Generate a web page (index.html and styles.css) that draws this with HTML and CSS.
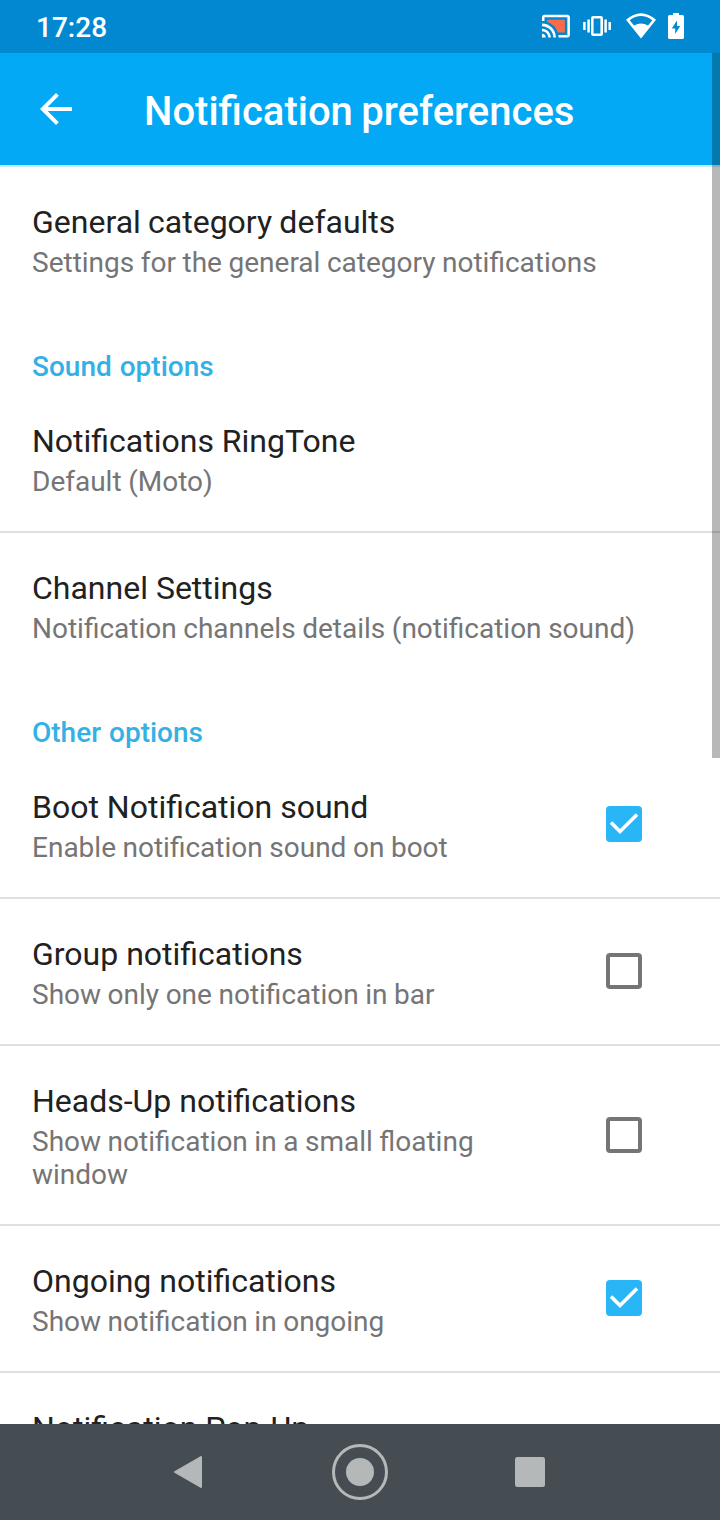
FILE: index.html
```html
<!DOCTYPE html>
<html lang="en">
<head>
<meta charset="utf-8">
<title>Notification preferences</title>
<link rel="stylesheet" href="styles.css">
</head>
<body>
<div class="screen">
  <header class="status">
    <span class="clock">17:28</span>
    <svg class="status-icons" width="150" height="32" viewBox="540 11 150 32">
      <g transform="translate(540.700 10.900) scale(1.270)">
        <path d="M5 7h14v10h-5.630A13 13 0 0 0 5 8.630z" fill="#fb6b48"/>
        <path d="M1 18v3h3c0-1.660-1.340-3-3-3zm0-4v2c2.760 0 5 2.240 5 5h2c0-3.870-3.130-7-7-7zm0-4v2c4.970 0 9 4.030 9 9h2c0-6.080-4.930-11-11-11zm20-7H3c-1.100 0-2 .9-2 2v3h2V5h18v14h-7v2h7c1.100 0 2-.9 2-2V5c0-1.100-.9-2-2-2z" fill="#fff"/>
      </g>
      <rect x="592.300" y="17.300" width="9.400" height="17.400" rx="1" fill="none" stroke="#fff" stroke-width="2.600"/>
      <path d="M584.400 22v8M588.600 19.500v13M605.600 19.500v13M609.700 22v8" stroke="#fff" stroke-width="2.500"/>
      <path fill-rule="evenodd" d="M626 19.800Q641 6.700 656 19.800L641 38.500zM629.700 20.200L634 25.600Q641 21.600 648 25.600L652.300 20.200Q641 11.800 629.700 20.200z" fill="#fff"/>
      <path d="M669.500 15h3.500v-2h6v2h3.500q1.500 0 1.500 1.500v21q0 1.500-1.500 1.500h-13q-1.500 0-1.500-1.500v-21q0-1.500 1.500-1.500z" fill="#fff"/>
      <path d="M677 20.500l-5.200 8h3.400v5.500l5-8H677z" fill="#0288d1"/>
    </svg>
  </header>
  <div class="appbar">
    <svg class="back" width="48" height="48" viewBox="0 0 24 24"><path d="M20 11H7.830l5.590-5.590L12 4l-8 8 8 8 1.410-1.410L7.830 13H20z" fill="#fff"/></svg>
    <h1 class="heading">Notification preferences</h1>
  </div>
  <main class="list">
    <section class="row"><div class="copy"><div class="title snug">General category defaults</div><div class="sub">Settings for the general category notifications</div></div></section>
    <h2 class="category">Sound options</h2>
    <section class="row"><div class="copy"><div class="title">Notifications RingTone</div><div class="sub">Default (Moto)</div></div></section>
    <section class="row ruled"><div class="copy"><div class="title">Channel Settings</div><div class="sub">Notification channels details (notification sound)</div></div></section>
    <h2 class="category">Other options</h2>
    <section class="row"><div class="copy"><div class="title">Boot Notification sound</div><div class="sub">Enable notification sound on boot</div></div><span class="box checked"><svg width="36" height="36" viewBox="0 0 36 36"><path d="M5 16.500l9 9L31 8.500" fill="none" stroke="#fff" stroke-width="3.600"/></svg></span></section>
    <section class="row ruled"><div class="copy"><div class="title">Group notifications</div><div class="sub">Show only one notification in bar</div></div><span class="box"></span></section>
    <section class="row ruled"><div class="copy"><div class="title">Heads-Up notifications</div><div class="sub">Show notification in a small floating<br>window</div></div><span class="box"></span></section>
    <section class="row ruled"><div class="copy"><div class="title">Ongoing notifications</div><div class="sub">Show notification in ongoing</div></div><span class="box checked"><svg width="36" height="36" viewBox="0 0 36 36"><path d="M5 16.500l9 9L31 8.500" fill="none" stroke="#fff" stroke-width="3.600"/></svg></span></section>
    <section class="row ruled"><div class="copy"><div class="title">Notification Pop-Up</div></div></section>
  </main>
  <nav class="nav">
    <svg width="720" height="96" viewBox="0 0 720 96"><path d="M175 48l26-15v30z" fill="#b4b8b9" stroke="#b4b8b9" stroke-width="2" stroke-linejoin="round"/><circle cx="360" cy="48" r="26.500" fill="none" stroke="#b4b8b9" stroke-width="3"/><circle cx="360" cy="48" r="14" fill="#b4b8b9"/><rect x="515" y="33" width="30" height="30" rx="2.500" fill="#b4b8b9"/></svg>
  </nav>
  <div class="scrollbar"></div>
</div>
</body>
</html>
```
FILE: styles.css
```css
body { margin: 0; font-family: Roboto, sans-serif; background: #fff; }
.screen { position: relative; width: 720px; height: 1520px; display: flex; flex-direction: column; overflow: hidden; }
.status { height: 53px; flex: none; background: #0288d1; display: flex; justify-content: space-between; box-sizing: border-box; padding: 11px 30px 0 36px; }
.clock { margin-top: 1px; color: #fff; font-size: 28px; line-height: 32px; font-weight: 500; }
.status-icons { display: block; }
.appbar { height: 112px; flex: none; background: #03a9f4; display: flex; align-items: center; }
.back { margin-left: 32px; }
.heading { margin: 5px 0 0 64px; color: #fff; font-size: 40px; line-height: 48px; font-weight: 500; word-spacing: -1.5px; white-space: nowrap; }
.list { flex: 1; min-height: 0; overflow: hidden; box-shadow: inset 0 2px #c5edff; }
.row { display: flex; align-items: center; box-sizing: border-box; padding: 36px 78px 33px 32px; }
.ruled { border-top: 2px solid #e0e0e0; padding-top: 34px; }
.copy { flex: 1; white-space: nowrap; }
.title { font-size: 32px; line-height: 42px; color: #212121; }
.snug { word-spacing: -.7px; }
.sub { margin-top: 3px; font-size: 28px; line-height: 33px; color: #757575; word-spacing: -.4px; }
.category { margin: 0; padding: 37px 32px 0; font-size: 28px; line-height: 35px; font-weight: 500; color: #33b1e6; word-spacing: 1px; }
.box { width: 36px; height: 36px; flex: none; box-sizing: border-box; margin-bottom: 2px; border: 4px solid #757575; border-radius: 4px; }
.checked { border: 0; background: #29b6f6; }
.checked svg { display: block; }
.nav { height: 96px; flex: none; background: #454d52; }
.nav svg { display: block; }
.scrollbar { position: absolute; right: 0; top: 53px; width: 8px; height: 705px; background: rgba(0,0,0,.28); }
```
